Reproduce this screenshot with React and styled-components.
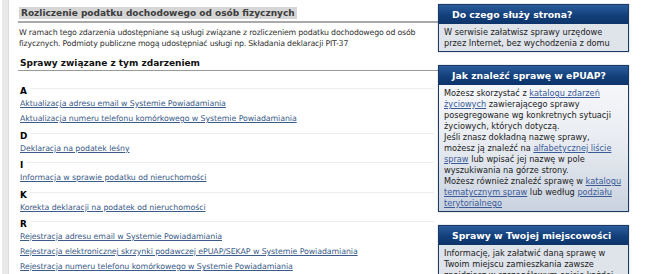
import React from 'react';
import styled, { createGlobalStyle } from 'styled-components';

const GlobalStyle = createGlobalStyle`
    html, body {
        margin: 0;
        padding: 0;
        background: #ffffff;
        overflow: hidden;
    }
    body {
        font-family: 'DejaVu Sans', Verdana, sans-serif;
        font-size: 7.85px;
        color: #333333;
    }
`;

const groups = [
    {
        letter: 'A',
        links: [
            'Aktualizacja adresu email w Systemie Powiadamiania',
            'Aktualizacja numeru telefonu komórkowego w Systemie Powiadamiania',
        ],
    },
    { letter: 'D', links: ['Deklaracja na podatek leśny'] },
    { letter: 'I', links: ['Informacja w sprawie podatku od nieruchomości'] },
    { letter: 'K', links: ['Korekta deklaracji na podatek od nieruchomości'] },
    {
        letter: 'R',
        links: [
            'Rejestracja adresu email w Systemie Powiadamiania',
            'Rejestracja elektronicznej skrzynki podawczej ePUAP/SEKAP w Systemie Powiadamiania',
            'Rejestracja numeru telefonu komórkowego w Systemie Powiadamiania',
        ],
    },
];

const App = () => {
    return (
        <>
            <GlobalStyle />
            <Page>
                <Strip />
                <Main>
                    <TitleRow>
                        <Title>Rozliczenie podatku dochodowego od osób fizycznych</Title>
                    </TitleRow>
                    <Description>
                        W ramach tego zdarzenia udostępniane są usługi związane z rozliczeniem podatku dochodowego od osób
                        fizycznych. Podmioty publiczne mogą udostępniać usługi np. Składania deklaracji PIT-37
                    </Description>
                    <SectionHeading>Sprawy związane z tym zdarzeniem</SectionHeading>
                    <GroupList>
                        {groups.map((g) => (
                            <Group key={g.letter}>
                                <LetterRow>
                                    <Letter>{g.letter}</Letter>
                                    <Rule />
                                </LetterRow>
                                {g.links.map((l) => (
                                    <CaseLink key={l} href="#">
                                        {l}
                                    </CaseLink>
                                ))}
                            </Group>
                        ))}
                    </GroupList>
                </Main>
                <Sidebar>
                    <Box>
                        <BoxHeader>Do czego służy strona?</BoxHeader>
                        <BoxBody>
                            W serwisie załatwisz sprawy urzędowe
                            <br />
                            przez Internet, bez wychodzenia z domu
                        </BoxBody>
                    </Box>
                    <Box>
                        <BoxHeader>Jak znaleźć sprawę w ePUAP?</BoxHeader>
                        <BoxBody $gradient>
                            Możesz skorzystać z <BoxLink href="#">katalogu zdarzeń życiowych</BoxLink> zawierającego
                            sprawy posegregowane wg konkretnych sytuacji życiowych, których dotyczą.
                            <br />
                            Jeśli znasz dokładną nazwę sprawy, możesz ją znaleźć na{' '}
                            <BoxLink href="#">alfabetycznej liście spraw</BoxLink> lub wpisać jej nazwę w pole
                            wyszukiwania na górze strony.
                            <br />
                            Możesz również znaleźć sprawę w <BoxLink href="#">katalogu tematycznym spraw</BoxLink> lub
                            według <BoxLink href="#">podziału terytorialnego</BoxLink>
                        </BoxBody>
                    </Box>
                    <Box>
                        <BoxHeader>Sprawy w Twojej miejscowości</BoxHeader>
                        <BoxBody>
                            Informację, jak załatwić daną sprawę w Twoim miejscu zamieszkania zawsze znajdziesz w
                            szczegółowym opisie każdej sprawy.
                        </BoxBody>
                    </Box>
                </Sidebar>
            </Page>
        </>
    );
};

export default App;

const Page = styled.div`
    display: flex;
    align-items: flex-start;
    height: 274px;
`;

const Strip = styled.div`
    width: 6px;
    height: 100%;
    margin-left: 2px;
    background: #e9e9e9;
    border-right: 1px solid #dcdcdc;
`;

const Main = styled.div`
    width: 420px;
    margin-left: 9px;
    padding-top: 7px;
`;

const TitleRow = styled.div`
    border-bottom: 2px solid #a9a9a9;
    padding-bottom: 2px;
    padding-left: 1px;
`;

const Title = styled.h1`
    display: inline-block;
    margin: 0;
    padding: 0 2px;
    background: #d6d6d6;
    color: #3c3c3c;
    font-size: 9px;
    font-weight: bold;
    line-height: 12px;
`;

const Description = styled.p`
    margin: 4px 0 0 1px;
    width: 412px;
    line-height: 11px;
    letter-spacing: -0.2px;
    color: #333333;
`;

const SectionHeading = styled.h2`
    margin: 8px 0 0;
    padding: 0 0 1px 2px;
    border-bottom: 1px solid #9a9a9a;
    font-size: 9px;
    font-weight: bold;
    line-height: 12px;
    color: #111111;
`;

const GroupList = styled.div`
    padding-top: 15px;
`;

const Group = styled.div`
    display: flex;
    flex-direction: column;
    align-items: flex-start;
    margin-bottom: 4.5px;
    padding-left: 2px;
`;

const LetterRow = styled.div`
    display: flex;
    align-items: flex-start;
    align-self: stretch;
    margin-right: 4px;
`;

const Letter = styled.span`
    font-size: 8.8px;
    font-weight: bold;
    line-height: 10px;
    color: #000000;
`;

const Rule = styled.div`
    flex: 1;
    margin: 2px 0 0 3px;
    border-top: 1px solid #eeeeee;
`;

const CaseLink = styled.a`
    display: block;
    line-height: 15px;
    letter-spacing: -0.08px;
    color: #3b5b88;
    text-decoration: underline;
`;

const Sidebar = styled.div`
    width: 191px;
    display: flex;
    flex-direction: column;
    gap: 13px;
    padding-top: 4px;
    font-size: 8.2px;
`;

const Box = styled.div`
    border: 1px solid #1c3a66;
    box-shadow: 0 0 1px rgba(20, 40, 80, 0.5);
`;

const BoxHeader = styled.div`
    height: 19px;
    line-height: 19px;
    padding-left: 13px;
    background: linear-gradient(#2b5d9c, #123f7a 55%, #0d346a);
    color: #ffffff;
    font-size: 9.3px;
    font-weight: bold;
    white-space: nowrap;
`;

const BoxBody = styled.div`
    padding: 3px 5.5px 2px 5px;
    line-height: 11px;
    color: #222222;
    background: ${(p) => (p.$gradient ? 'linear-gradient(#f6f7fa, #e6eaf0 50%, #c9d2df)' : '#dfe3ea')};
`;

const BoxLink = styled.a`
    color: #3b5b98;
    text-decoration: underline;
`;
